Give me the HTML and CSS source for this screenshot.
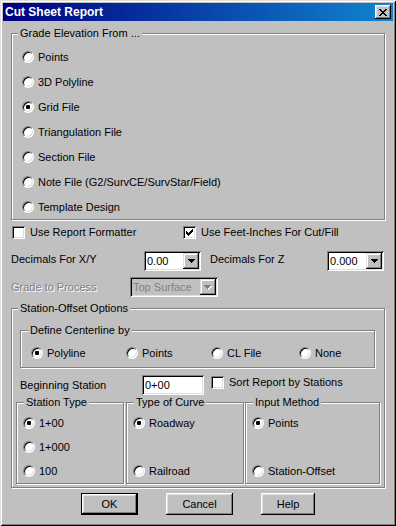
FILE: index.html
```html
<!DOCTYPE html>
<html lang="en">
<head>
  <meta charset="UTF-8" />
  <title>Cut Sheet Report</title>
  <link rel="stylesheet" href="styles.css">
</head>
<body>

  <div class="window">
    <div class="titlebar">
      <span class="title">Cut Sheet Report</span>
      <button class="close">
        <svg width="8" height="7" viewBox="0 0 8 7" shape-rendering="crispEdges"><path d="M0 0h2v1h-2zM6 0h2v1h-2zM1 1h2v1h-2zM5 1h2v1h-2zM2 2h4v1h-4zM3 3h2v1h-2zM2 4h4v1h-4zM1 5h2v1h-2zM5 5h2v1h-2zM0 6h2v1h-2zM6 6h2v1h-2z" fill="#000"/></svg>
      </button>
    </div>

    <div class="content">
      <fieldset class="group grade-from">
        <legend>Grade Elevation From ...</legend>
        <div class="body">
          <div class="opt"><span class="radio"></span>Points</div>
          <div class="opt"><span class="radio"></span>3D Polyline</div>
          <div class="opt"><span class="radio on"></span>Grid File</div>
          <div class="opt"><span class="radio"></span>Triangulation File</div>
          <div class="opt"><span class="radio"></span>Section File</div>
          <div class="opt"><span class="radio"></span>Note File (G2/SurvCE/SurvStar/Field)</div>
          <div class="opt"><span class="radio"></span>Template Design</div>
        </div>
      </fieldset>

      <div class="row checks">
        <div class="opt chk-first"><span class="check"></span>Use Report Formatter</div>
        <div class="opt"><span class="check"><svg width="7" height="7" viewBox="0 0 7 7" shape-rendering="crispEdges"><path d="M6 0h1v3h-1v1h-1v1h-1v1h-1v1h-1v-1h-1v-1h-1v-3h1v1h1v1h1v-1h1v-1h1v-1h1z" fill="#000"/></svg></span>Use Feet-Inches For Cut/Fill</div>
      </div>

      <div class="row decimals">
        <span class="lbl lbl-xy">Decimals For X/Y</span>
        <div class="combo small">
          <span class="val">0.00</span>
          <span class="arrow"><svg width="7" height="4" viewBox="0 0 7 4" shape-rendering="crispEdges"><path d="M0 0h7v1h-1v1h-1v1h-1v1h-1v-1h-1v-1h-1v-1h-1z" fill="#000"/></svg></span>
        </div>
        <span class="lbl lbl-z">Decimals For Z</span>
        <div class="combo small">
          <span class="val">0.000</span>
          <span class="arrow"><svg width="7" height="4" viewBox="0 0 7 4" shape-rendering="crispEdges"><path d="M0 0h7v1h-1v1h-1v1h-1v1h-1v-1h-1v-1h-1v-1h-1z" fill="#000"/></svg></span>
        </div>
      </div>

      <div class="row process">
        <span class="lbl lbl-process disabled">Grade to Process</span>
        <div class="combo wide off">
          <span class="val">Top Surface</span>
          <span class="arrow"><svg width="8" height="5" viewBox="0 0 8 5" shape-rendering="crispEdges"><path d="M1 1h7v1h-1v1h-1v1h-1v1h-1v-1h-1v-1h-1v-1h-1z" fill="#fff"/><path d="M0 0h7v1h-1v1h-1v1h-1v1h-1v-1h-1v-1h-1v-1h-1z" fill="#808080"/></svg></span>
        </div>
      </div>

      <fieldset class="group station">
        <legend>Station-Offset Options</legend>
        <div class="body">
          <fieldset class="group centerline">
            <legend>Define Centerline by</legend>
            <div class="body cl-row">
              <div class="opt cl-polyline"><span class="radio on"></span>Polyline</div>
              <div class="opt cl-points"><span class="radio"></span>Points</div>
              <div class="opt cl-file"><span class="radio"></span>CL File</div>
              <div class="opt"><span class="radio"></span>None</div>
            </div>
          </fieldset>

          <div class="begin-row">
            <span class="lbl lbl-begin">Beginning Station</span>
            <div class="textbox">0+00</div>
            <div class="opt sort"><span class="check"></span>Sort Report by Stations</div>
          </div>

          <div class="subgroups">
            <fieldset class="group sub station-type">
              <legend>Station Type</legend>
              <div class="body">
                <div class="opt"><span class="radio on"></span>1+00</div>
                <div class="opt"><span class="radio"></span>1+000</div>
                <div class="opt"><span class="radio"></span>100</div>
              </div>
            </fieldset>
            <fieldset class="group sub curve-type">
              <legend>Type of Curve</legend>
              <div class="body">
                <div class="opt"><span class="radio on"></span>Roadway</div>
                <div class="opt"></div>
                <div class="opt"><span class="radio"></span>Railroad</div>
              </div>
            </fieldset>
            <fieldset class="group sub input-method">
              <legend>Input Method</legend>
              <div class="body">
                <div class="opt"><span class="radio on"></span>Points</div>
                <div class="opt"></div>
                <div class="opt"><span class="radio"></span>Station-Offset</div>
              </div>
            </fieldset>
          </div>
        </div>
      </fieldset>

      <div class="buttons">
        <button class="btn default btn-ok">OK</button>
        <button class="btn btn-cancel">Cancel</button>
        <button class="btn btn-help">Help</button>
      </div>
    </div>
  </div>

</body>
</html>
```

FILE: styles.css
```css
* {
  box-sizing: border-box;
}

body {
  margin: 0;
  background: #c0c0c0;
  font-family: "Liberation Sans", Arial, sans-serif;
  font-size: 11px;
  color: #000;
}

.window {
  width: 396px;
  height: 526px;
  padding: 3px;
  background: #c0c0c0;
  box-shadow: inset 1px 1px #dfdfdf, inset -1px -1px #000, inset 2px 2px #fff, inset -2px -2px #808080;
}

.titlebar {
  height: 18px;
  display: flex;
  align-items: center;
  justify-content: space-between;
  padding: 0 2px;
  background: linear-gradient(to right, #000080, #1084d0);
}

.title {
  color: #fff;
  font-weight: bold;
  font-size: 12px;
}

.close {
  width: 16px;
  height: 14px;
  padding: 0;
  border: none;
  display: flex;
  align-items: center;
  justify-content: center;
  background: #c0c0c0;
  box-shadow: inset -1px -1px #000, inset 1px 1px #fff, inset -2px -2px #808080, inset 2px 2px #dfdfdf;
}

.content {
  padding: 0 8px;
}

/* etched group boxes */
.group {
  margin: 0;
  padding: 0;
  min-width: 0;
  border: 1px solid #808080;
  box-shadow: inset 1px 1px #fff, 1px 1px #fff;
}

.group legend {
  margin-left: 6px;
  padding: 0 2px;
  line-height: 13px;
  background: #c0c0c0;
}

.opt {
  display: flex;
  align-items: center;
  white-space: nowrap;
}

.radio {
  width: 12px;
  height: 12px;
  margin-right: 4px;
  flex: none;
  border-radius: 50%;
  border: 1px solid;
  border-color: #808080 #fff #fff #808080;
  background: #fff;
  box-shadow: inset 1px 1px #000, inset -1px -1px #dfdfdf;
  display: flex;
  align-items: center;
  justify-content: center;
}

.radio.on::after {
  content: "";
  width: 4px;
  height: 4px;
  border-radius: 1px;
  background: #000;
}

.check {
  width: 13px;
  height: 13px;
  margin-right: 5px;
  flex: none;
  background: #fff;
  box-shadow: inset 1px 1px #808080, inset -1px -1px #fff, inset 2px 2px #000, inset -2px -2px #dfdfdf;
  display: flex;
  align-items: center;
  justify-content: center;
}

.grade-from {
  margin-top: 6px;
}

.grade-from .body {
  padding: 4px 0 0 10px;
}

.grade-from .opt {
  height: 25px;
}

.row {
  display: flex;
  align-items: flex-start;
}

.checks {
  margin-top: 4px;
  height: 16px;
  padding-left: 1px;
  align-items: center;
}

.chk-first {
  width: 171px;
}

.lbl {
  line-height: 16px;
  white-space: nowrap;
}

.disabled {
  color: #808080;
  text-shadow: 1px 1px #fff;
}

.decimals {
  margin-top: 11px;
}

.lbl-xy {
  width: 133px;
}

.lbl-z {
  width: 117px;
  margin-left: 9px;
}

.combo {
  display: flex;
  height: 20px;
  padding: 2px;
  background: #fff;
  box-shadow: inset 1px 1px #808080, inset -1px -1px #fff, inset 2px 2px #000, inset -2px -2px #dfdfdf;
}

.combo.small {
  width: 57px;
}

.combo.wide {
  width: 88px;
}

.combo.off {
  background: #c0c0c0;
  color: #808080;
}

.val {
  flex: 1;
  padding-left: 1px;
  line-height: 16px;
  white-space: nowrap;
}

.arrow {
  width: 16px;
  height: 16px;
  display: flex;
  align-items: center;
  justify-content: center;
  background: #c0c0c0;
  box-shadow: inset -1px -1px #000, inset 1px 1px #dfdfdf, inset -2px -2px #808080, inset 2px 2px #fff;
}

.process {
  margin-top: 6px;
}

.lbl-process {
  width: 119px;
  padding-top: 2px;
}

.station {
  margin-top: 5px;
}

.station > .body {
  padding: 9px 0 3px 0;
}

.centerline {
  margin: 0 9px 0 8px;
}

.centerline legend {
  margin-left: 7px;
}

.cl-row {
  display: flex;
  height: 30px;
  padding: 8px 0 6px 10px;
}

.cl-polyline {
  width: 95px;
}

.cl-points {
  width: 85px;
}

.cl-file {
  width: 88px;
}

.begin-row {
  display: flex;
  align-items: flex-start;
  margin-top: 7px;
  padding-left: 8px;
}

.lbl-begin {
  width: 122px;
  padding-top: 2px;
}

.textbox {
  width: 62px;
  height: 20px;
  padding: 2px 3px;
  line-height: 16px;
  background: #fff;
  box-shadow: inset 1px 1px #808080, inset -1px -1px #fff, inset 2px 2px #000, inset -2px -2px #dfdfdf;
}

.sort {
  margin-left: 7px;
  margin-top: 1px;
  line-height: 13px;
}

.subgroups {
  display: flex;
  margin-top: 1px;
  padding-left: 4px;
}

.sub legend {
  margin-left: 7px;
}

.sub .body {
  padding: 2px 0 0 6px;
}

.sub .opt {
  height: 24px;
}

.station-type {
  width: 108px;
}

.curve-type {
  width: 118px;
  margin-left: 2px;
}

.input-method {
  width: 135px;
  margin-left: 1px;
}

.buttons {
  display: flex;
  justify-content: center;
  gap: 28px;
  margin-top: 5px;
}

.btn {
  height: 22px;
  padding: 0;
  border: none;
  font: inherit;
  color: #000;
  background: #c0c0c0;
  box-shadow: inset -1px -1px #000, inset 1px 1px #fff, inset -2px -2px #808080, inset 2px 2px #dfdfdf;
}

.btn.default {
  box-shadow: inset 0 0 0 1px #000, inset -2px -2px #000, inset 2px 2px #fff, inset -3px -3px #808080, inset 3px 3px #dfdfdf;
}

.btn-ok {
  width: 57px;
}

.btn-cancel {
  width: 67px;
}

.btn-help {
  width: 54px;
}
```
